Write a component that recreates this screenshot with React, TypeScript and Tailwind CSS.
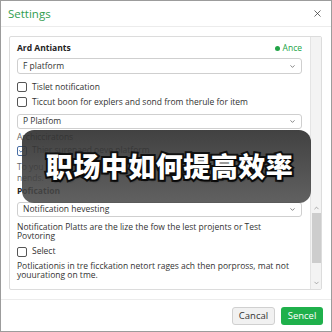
import React from "react";
import { X, ChevronDown, ChevronUp, Check } from "lucide-react";

function Select({ label, h = "h-[16px]", mt }: { label: string; h?: string; mt: string }) {
  return (
    <div
      className={`${mt} ${h} flex items-center justify-between rounded-[3px] border border-[#cfcfcf] bg-white pl-[5px] pr-[5px] text-[#333]`}
    >
      <span>{label}</span>
      <ChevronDown size={7} strokeWidth={2.2} className="text-[#444]" />
    </div>
  );
}

function Box({ checked = false }: { checked?: boolean }) {
  return (
    <span
      className={`flex h-[10px] w-[10px] shrink-0 items-center justify-center rounded-[2px] border ${
        checked ? "border-[#4a6fa5]" : "border-[#555]"
      } bg-white`}
    >
      {checked && <Check size={9} strokeWidth={2.5} className="text-[#3466b0]" />}
    </span>
  );
}

export default function App() {
  return (
    <div
      className="relative flex h-[332px] w-[332px] flex-col border border-[#9c9c9c] bg-white text-[8.5px] text-[#333]"
      style={{ fontFamily: '"Open Sans", "Noto Sans", sans-serif' }}
    >
      {/* Header */}
      <div className="flex h-[26px] shrink-0 items-center justify-between border-b border-[#ececec] pl-[7px] pr-[8px]">
        <span className="text-[11.5px] text-[#2f9e4f]">Settings</span>
        <X size={11} strokeWidth={1.6} className="text-[#333]" />
      </div>

      {/* Body */}
      <div className="flex min-h-0 flex-1 pb-[9px] pl-[8px] pr-[9px] pt-[9px]">
        <div className="flex flex-1 rounded-[2px] border border-[#dcdcdc]">
          <div className="flex flex-1 flex-col pl-[7px] pr-[8px] pt-[4px]">
            <div className="flex h-[14px] items-center justify-between">
              <span className="font-bold text-[#222]">Ard Antiants</span>
              <span className="flex items-center gap-[3px] text-[#22a447]">
                <span className="h-[5px] w-[5px] rounded-full bg-[#22a447]" />
                Ance
              </span>
            </div>
            <Select label="F platform" mt="mt-[3px]" />
            <div className="mt-[6px] flex h-[14px] items-center gap-[5px]">
              <Box />
              <span>Tislet notification</span>
            </div>
            <div className="mt-[1px] flex h-[14px] items-center gap-[5px]">
              <Box />
              <span className="whitespace-nowrap">Ticcut boon for explers and sond from therule for item</span>
            </div>
            <Select label="P Platfom" h="h-[15px]" mt="mt-[5px]" />
            <div className="mt-[2px] flex h-[13px] items-center text-[#666]">Archicciratons</div>
            <div className="flex h-[13px] items-center gap-[5px]">
              <Box checked />
              <span className="text-[#555]">Thier surenaed oeve platform</span>
            </div>
            <div className="mt-[4px] leading-[11px] text-[#666]">
              <div className="whitespace-nowrap">To you plan the updates to cheek from everyone and</div>
              <div>nends.</div>
            </div>
            <div className="mt-[2px] flex h-[13px] items-center font-bold text-[#222]">Pofication</div>
            <Select label="Notification hevesting" h="h-[15px]" mt="mt-[4px]" />
            <div className="mt-[5px] leading-[9px]">
              <div className="whitespace-nowrap">Notification Platts are the lize the fow the lest projents or Test</div>
              <div>Povtoring</div>
            </div>
            <div className="mt-[5px] flex h-[13px] items-center gap-[5px]">
              <Box />
              <span>Select</span>
            </div>
            <div className="mt-[3px] leading-[9px]">
              <div className="whitespace-nowrap">Potlicationis in tre ficckation netort rages ach then porpross, mat not</div>
              <div>youurationg on tme.</div>
            </div>
          </div>
          {/* Scrollbar */}
          <div className="flex w-[11px] shrink-0 flex-col items-center border-l border-[#e4e4e4] bg-[#f3f3f3]">
            <div className="flex-1" />
            <ChevronUp size={7} strokeWidth={2} className="h-[8px] text-[#777]" />
            <div className="mt-[1px] h-[50px] w-[9px] bg-[#cdcdcd]" />
            <div className="mt-[16px]" />
            <ChevronDown size={7} strokeWidth={2} className="mb-[2px] h-[8px] text-[#777]" />
          </div>
        </div>
      </div>

      {/* Footer */}
      <div className="flex h-[32px] shrink-0 items-start justify-end gap-[6px] border-t border-[#ececec] pr-[8px] pt-[7px]">
        <button className="h-[18px] w-[43px] rounded-[3px] border border-[#d0d0d0] bg-[#f1f1f1] text-[9.5px] text-[#333]">
          Cancal
        </button>
        <button className="h-[18px] w-[42px] rounded-[3px] bg-[#1fb04b] text-[9.5px] text-white">Sencel</button>
      </div>

      {/* Overlay caption */}
      <div className="absolute left-[21px] top-[129px] flex h-[73px] w-[289px] items-center justify-center rounded-[12px] bg-gradient-to-b from-[rgba(45,45,45,0.9)] to-[rgba(75,75,75,0.88)]">
        <span
          className="font-black text-white [-webkit-text-stroke:4px_#111] [paint-order:stroke_fill] text-[27px] tracking-[0.5px] pl-[6px] [text-shadow:1px_2px_2px_rgba(0,0,0,0.6)]"
          style={{ fontFamily: '"Noto Sans CJK SC", sans-serif' }}
        >
          职场中如何提高效率
        </span>
      </div>
    </div>
  );
}
